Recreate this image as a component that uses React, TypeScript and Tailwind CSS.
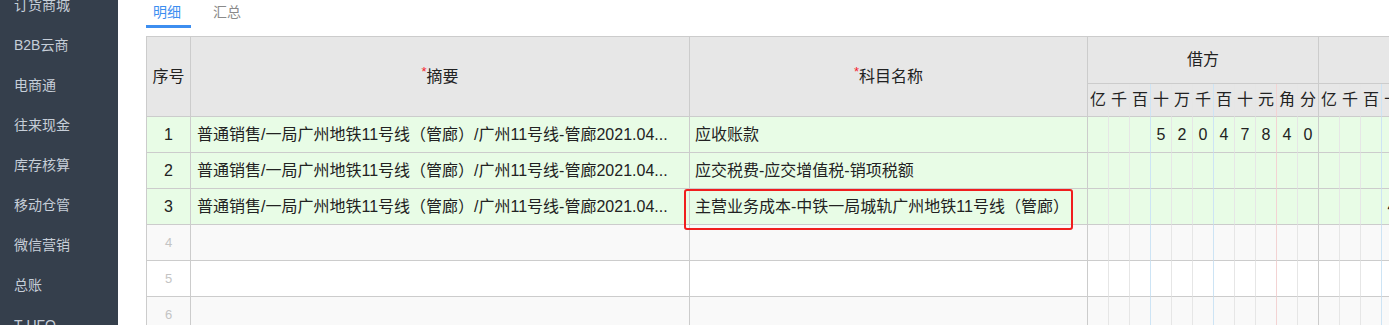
import React from "react";

const menu = ["订货商城", "B2B云商", "电商通", "往来现金", "库存核算", "移动仓管", "微信营销", "总账", "T-UFO"];
const units = ["亿", "千", "百", "十", "万", "千", "百", "十", "元", "角", "分"];

type Row = {
  no: number;
  summary: string;
  subject: string;
  debit?: string;
  credit?: string;
  marked?: boolean;
};

const summaryText = "普通销售/一局广州地铁11号线（管廊）/广州11号线-管廊2021.04...";

const rows: Row[] = [
  { no: 1, summary: summaryText, subject: "应收账款", debit: "52047840" },
  { no: 2, summary: summaryText, subject: "应交税费-应交增值税-销项税额" },
  { no: 3, summary: summaryText, subject: "主营业务成本-中铁一局城轨广州地铁11号线（管廊）", credit: "46060035", marked: true },
  { no: 4, summary: "", subject: "" },
  { no: 5, summary: "", subject: "" },
  { no: 6, summary: "", subject: "" },
];

// right border of each money cell: blue before 十万 / 百, red before 角, full line after 分
const lineFor = (i: number) => {
  if (i === 2 || i === 5) return "border-r-[#cde4f5]";
  if (i === 8) return "border-r-[#f3d3d3]";
  if (i === 10) return "border-r-[#cccccc]";
  return "border-r-[#e6e6e6]";
};

const toDigits = (v?: string) => {
  const d = (v ?? "").split("");
  return Array.from({ length: 11 }, (_, i) => d[i - (11 - d.length)] ?? "");
};

const Star = () => <span className="relative -top-[5px] text-[13px] text-[#f5222d]">*</span>;

const Money = ({ value, bg }: { value?: string; bg: string }) => (
  <>
    {toDigits(value).map((c, i) => (
      <div
        key={i}
        className={`${bg} ${lineFor(i)} border-r border-b border-b-[#cccccc] flex items-center justify-center text-[16px] text-[#222]`}
      >
        {c}
      </div>
    ))}
  </>
);

const App = () => {
  return (
    <div className="flex w-[1389px] h-[325px] overflow-hidden bg-white [text-spacing-trim:space-all] font-['Liberation_Sans','Noto_Sans_CJK_SC',sans-serif]">
      <div className="w-[118px] shrink-0 bg-[#353f4c]">
        <div className="-mt-[15px] flex flex-col">
          {menu.map(m => (
            <div key={m} className="h-10 flex items-center pl-[14px] text-[14px] text-[#c6ced8]">
              {m}
            </div>
          ))}
        </div>
      </div>

      <div className="flex-1 min-w-0 pl-[28px] overflow-hidden">
        <div className="flex h-[36px] items-start">
          <div className="w-[45px] h-[28px] pl-[7px] flex items-center text-[14px] text-[#3d8ef0] border-b-[3px] border-[#3d8ef0]">
            明细
          </div>
          <div className="ml-[22px] h-[25px] flex items-center text-[14px] text-[#8a8a8a]">汇总</div>
        </div>

        <div className="grid w-max grid-cols-[44px_499px_398px_repeat(22,21px)] grid-rows-[47px_33px_repeat(6,36px)] border-l border-t border-[#cccccc] text-[#222]">
          <div className="row-span-2 bg-[#e7e7e7] border-r border-b border-[#cccccc] flex items-center justify-center text-[16px]">
            序号
          </div>
          <div className="row-span-2 bg-[#e7e7e7] border-r border-b border-[#cccccc] flex items-center justify-center text-[16px]">
            <Star />摘要
          </div>
          <div className="row-span-2 bg-[#e7e7e7] border-r border-b border-[#cccccc] flex items-center justify-center text-[16px]">
            <Star />科目名称
          </div>
          <div className="col-span-11 bg-[#e7e7e7] border-r border-b border-[#cccccc] flex items-center justify-center text-[16px]">
            借方
          </div>
          <div className="col-span-11 bg-[#e7e7e7] border-r border-b border-[#cccccc] flex items-center justify-center text-[16px]">
            贷方
          </div>
          {[...units, ...units].map((u, i) => (
            <div
              key={i}
              className={`bg-[#e7e7e7] border-r border-b border-b-[#cccccc] ${lineFor(i % 11)} flex items-center justify-center text-[16px]`}
            >
              {u}
            </div>
          ))}

          {rows.map(r => {
            const bg = r.no <= 3 ? "bg-[#e8fce6]" : r.no % 2 === 0 ? "bg-[#f9f9f9]" : "bg-white";
            return (
              <React.Fragment key={r.no}>
                <div
                  className={`${bg} border-r border-b border-[#cccccc] flex items-center justify-center ${
                    r.summary ? "text-[16px] text-[#222]" : "text-[13px] text-[#c4c4c4]"
                  }`}
                >
                  {r.no}
                </div>
                <div className={`${bg} border-r border-b border-[#cccccc] flex items-center pl-[6px] text-[16px] whitespace-nowrap overflow-hidden`}>
                  {r.summary}
                </div>
                <div className={`${bg} relative border-r border-b border-[#cccccc] flex items-center pl-[5px] text-[16px] whitespace-nowrap`}>
                  {r.subject}
                  {r.marked && (
                    <div className="absolute z-10 -left-[6px] top-0 w-[389px] h-[41px] border-2 border-[#f01e1e] rounded-[3px]" />
                  )}
                </div>
                <Money value={r.debit} bg={bg} />
                <Money value={r.credit} bg={bg} />
              </React.Fragment>
            );
          })}
        </div>
      </div>
    </div>
  );
};

export default App;
